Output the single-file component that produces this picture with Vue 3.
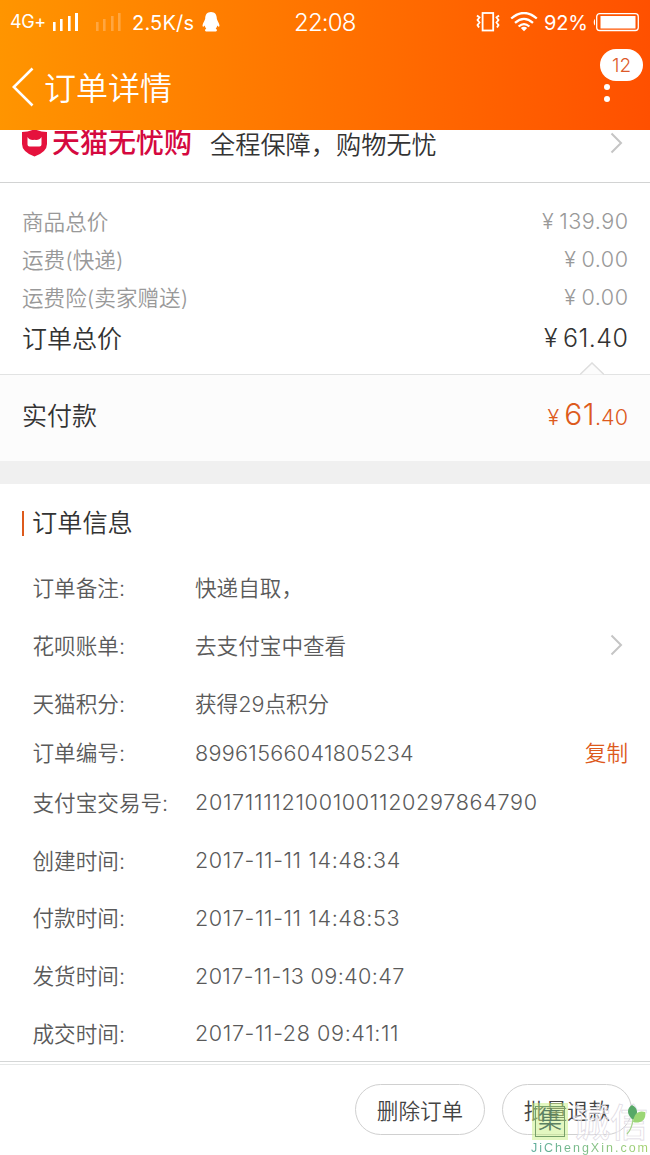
<template>
    <div class="page">
        <header class="header">
            <div class="status-bar">
                <span class="network">4G+</span>
                <svg class="signal" width="26" height="18" viewBox="0 0 26 18" fill="#fff">
                    <rect x="0" y="9" width="2.6" height="9" />
                    <rect x="7" y="6" width="2.6" height="12" />
                    <rect x="15" y="3" width="2.6" height="15" />
                    <rect x="22" y="0" width="3" height="18" />
                </svg>
                <svg class="signal-off" width="26" height="18" viewBox="0 0 26 18" fill="#ffa640">
                    <rect x="0" y="9" width="2.6" height="9" />
                    <rect x="7" y="6" width="2.6" height="12" />
                    <rect x="15" y="3" width="2.6" height="15" />
                    <rect x="22" y="0" width="2.6" height="18" />
                </svg>
                <span class="speed">2.5K/s</span>
                <svg class="penguin" width="18" height="20" viewBox="0 0 18 20" fill="#fff">
                    <path d="M9 0C5 0 3.2 2.8 3.2 6.4C3.2 8 1 10.500 .6 13C.4 14.800 1 15.500 2.700 13.500C3 15 3.500 15.800 4.300 16.500C2.500 17.500 2.500 19.500 5 19.500H13C15.500 19.500 15.500 17.500 13.700 16.500C14.500 15.800 15 15 15.300 13.500C17 15.500 17.600 14.800 17.400 13C17 10.500 14.800 8 14.800 6.400C14.800 2.800 13 0 9 0Z" />
                </svg>
                <span class="clock">22:08</span>
                <svg class="vibrate" width="24" height="20" viewBox="0 0 24 20" fill="none" stroke="#fff" stroke-width="1.8">
                    <rect x="6.600" y="1" width="10.600" height="17.500" />
                    <path d="M1 3.500L3.500 5.500L1.500 8L3.500 10.500L1.500 13L3 15.500M23 3.500L20.500 5.500L22.500 8L20.500 10.500L22.500 13L21 15.500" />
                </svg>
                <svg class="wifi" width="28" height="20" viewBox="0 0 28 20" fill="none" stroke="#fff" stroke-width="2.3">
                    <path d="M1.200 6.500Q14 -4.500 26.800 6.500M5 10.800Q14 3 23 10.800M8.600 14.500Q14 9.800 19.400 14.500" />
                    <path d="M10.800 16Q14 13.500 17.200 16L14 19.300Z" fill="#fff" stroke="none" />
                </svg>
                <span class="percent">92%</span>
                <svg class="battery" width="46" height="20" viewBox="0 0 46 20">
                    <rect x="3.700" y="1.700" width="41.600" height="16.800" rx="3" fill="none" stroke="#fff" stroke-width="1.300" />
                    <rect x="7.500" y="4" width="35" height="12.500" fill="#fff" />
                    <path d="M2 7C.3 7.500 .3 13 2 13.500Z" fill="#fff" />
                </svg>
            </div>
            <div class="title-bar">
                <svg class="back" width="22" height="40" viewBox="0 0 22 40" fill="none" stroke="#fff" stroke-width="2.6">
                    <path d="M20.500 1.500L1.800 20L20.500 38.500" />
                </svg>
                <h1>订单详情</h1>
                <div class="more">
                    <span class="badge">12</span>
                    <i></i>
                    <i></i>
                </div>
            </div>
        </header>

        <div class="guarantee">
            <div class="guarantee-inner">
                <svg width="27" height="28" viewBox="0 0 27 28">
                    <path d="M1 3Q8 3 13.500 0Q19 3 26 3V15Q26 23 13.500 27.500Q1 23 1 15Z" fill="#e5123d" />
                    <path d="M6.500 8Q8.500 11.500 13.500 10.800Q18.500 11.500 20.500 8V15.500Q20.500 17.500 18.500 17.500H8.500Q6.500 17.500 6.500 15.500Z" fill="#fff" />
                </svg>
                <span class="mall">天猫无忧购</span>
                <span class="slogan">全程保障，购物无忧</span>
                <svg class="arrow" width="13" height="22" viewBox="0 0 13 22"><path d="M1.500 1.500L11 11L1.500 20.500" /></svg>
            </div>
        </div>

        <section class="prices">
            <div v-for="p in prices" :key="p.label" class="price" :class="{ total: p.total }">
                <span>{{ p.label }}</span>
                <span class="amount"><em>¥</em>{{ p.amount }}</span>
            </div>
        </section>

        <section class="paid">
            <svg class="notch" width="24" height="13" viewBox="0 0 24 13">
                <path d="M0 12.500L12 1L24 12.500" fill="#fcfcfc" stroke="#dedede" stroke-width="1.500" />
            </svg>
            <span>实付款</span>
            <span class="paid-amount"><em>¥</em><b>61</b>.40</span>
        </section>

        <div class="gap"></div>

        <section class="info">
            <h2>订单信息</h2>
            <div v-for="row in rows" :key="row.label" class="row" :class="{ compact: row.copy }">
                <span class="label">{{ row.label }}:</span>
                <span class="value" :class="row.kind">{{ row.value }}</span>
                <svg v-if="row.link" class="arrow" width="13" height="22" viewBox="0 0 13 22"><path d="M1.500 1.500L11 11L1.500 20.500" /></svg>
                <span v-if="row.copy" class="copy">复制</span>
            </div>
        </section>

        <footer class="footer">
            <button>删除订单</button>
            <button>批量退款</button>
            <div class="watermark">
                <div class="mark-top">
                    <span class="mark-box">集</span>
                    <span class="mark-name">诚信</span>
                    <svg class="leaf" width="20" height="30" viewBox="0 0 20 30">
                        <path d="M7 15C0 9 1 3 6 0C12 3 13 9 7 15Z" fill="#57a867" />
                        <path d="M7 17C8 8 13 5 19 7C21 15 14 19 7 17Z" fill="#9bd675" />
                        <path d="M7 14Q6 24 1 29" fill="none" stroke="#a6d48c" stroke-width="1.300" />
                    </svg>
                </div>
                <div class="mark-url">JiChengXin.com</div>
            </div>
        </footer>
    </div>
</template>

<script setup>
import { ref } from 'vue';

const prices = ref([
    { label: '商品总价', amount: '139.90' },
    { label: '运费(快递)', amount: '0.00' },
    { label: '运费险(卖家赠送)', amount: '0.00' },
    { label: '订单总价', amount: '61.40', total: true }
]);

const rows = ref([
    { label: '订单备注', value: '快递自取，' },
    { label: '花呗账单', value: '去支付宝中查看', link: true },
    { label: '天猫积分', value: '获得29点积分' },
    { label: '订单编号', value: '89961566041805234', copy: true, kind: 'number' },
    { label: '支付宝交易号', value: '2017111121001001120297864790', kind: 'trade' },
    { label: '创建时间', value: '2017-11-11 14:48:34', kind: 'date' },
    { label: '付款时间', value: '2017-11-11 14:48:53', kind: 'date' },
    { label: '发货时间', value: '2017-11-13 09:40:47', kind: 'date tight' },
    { label: '成交时间', value: '2017-11-28 09:41:11', kind: 'date' }
]);
</script>

<style>
body {
    margin: 0;
    background: #fff;
}
</style>

<style scoped>
* {
    box-sizing: border-box;
}

.page {
    width: 650px;
    height: 1155px;
    display: flex;
    flex-direction: column;
    overflow: hidden;
    background: #fff;
    font-family: Inter, "Noto Sans CJK SC", sans-serif;
    font-weight: 350;
    color: #333;
    white-space: nowrap;
}

svg {
    display: block;
    flex: none;
}

em,
b {
    font-style: normal;
    font-weight: inherit;
}

.header {
    flex: none;
    height: 130px;
    background: linear-gradient(92deg, #ff9500, #ff5000);
    color: #fff;
}

.status-bar {
    height: 44px;
    display: flex;
    align-items: center;
    line-height: 44px;
    padding-left: 10px;
    font-weight: 400;
}

.network {
    width: 43px;
    font-size: 18px;
    letter-spacing: -0.4px;
}

.signal-off {
    margin-left: 17px;
}

.speed {
    width: 70px;
    margin-left: 10px;
    padding-top: 1px;
    font-size: 20px;
    letter-spacing: 0.2px;
}

.clock {
    width: 64px;
    margin-left: 74px;
    padding-top: 2px;
    font-size: 24px;
    font-weight: 350;
    letter-spacing: -0.8px;
}

.vibrate {
    margin-left: 118px;
}

.wifi {
    margin-left: 10px;
}

.percent {
    width: 45px;
    margin-left: 6px;
    padding-top: 2px;
    font-size: 20px;
    letter-spacing: -0.2px;
}

.battery {
    margin-left: 4px;
}

.title-bar {
    height: 86px;
    display: flex;
    align-items: center;
    padding: 0 7px 0 12px;
}

h1 {
    margin: 4px 0 0 10px;
    font-size: 32px;
    line-height: 40px;
    font-weight: 350;
}

.more {
    align-self: flex-start;
    margin: 5px 0 0 auto;
    width: 43px;
}

.badge {
    display: block;
    height: 32px;
    margin-bottom: 3px;
    border-radius: 16px;
    background: #fff;
    color: #dd5a2a;
    font-size: 19px;
    line-height: 34px;
    text-align: center;
}

.more i {
    display: block;
    width: 6px;
    height: 6px;
    margin: 0 0 6px 4px;
    border-radius: 50%;
    background: #fff;
}

.guarantee {
    flex: none;
    height: 53px;
    overflow: hidden;
    border-bottom: 1px solid #d2d3d3;
}

.guarantee-inner {
    height: 76px;
    margin-top: -25px;
    display: flex;
    align-items: center;
    padding: 0 27px 0 21px;
}

.mall {
    width: 158px;
    margin-left: 4px;
    font-size: 28px;
    line-height: 36px;
    font-weight: 500;
    color: #d5093f;
}

.slogan {
    font-size: 25.2px;
    line-height: 36px;
    margin-top: 3px;
}

.arrow {
    margin-left: auto;
    fill: none;
    stroke: #c5c5c5;
    stroke-width: 2;
}

.prices {
    flex: none;
    height: 191px;
    padding: 20px 22px 0;
}

.price {
    height: 38px;
    display: flex;
    justify-content: space-between;
    font-size: 21.6px;
    line-height: 38px;
    color: #999;
}

.amount {
    margin-top: -1px;
    letter-spacing: 0.5px;
    margin-right: -0.5px;
}

.amount em {
    margin-right: 5px;
}

.price.total {
    height: 44px;
    font-size: 25px;
    line-height: 44px;
    color: #333;
}

.paid {
    position: relative;
    flex: none;
    height: 87px;
    display: flex;
    justify-content: space-between;
    align-items: center;
    padding: 0 22px 8px;
    border-top: 1px solid #e2e3e3;
    background: #fcfcfc;
    font-size: 25px;
}

.notch {
    position: absolute;
    right: 46px;
    top: -13px;
}

.paid-amount {
    font-size: 21.6px;
    color: #dd5a1c;
}

.paid-amount b {
    font-size: 30px;
    letter-spacing: 0.5px;
}

.paid-amount em {
    margin-right: 5px;
}

.gap {
    flex: none;
    height: 23px;
    background: #f0f0f0;
}

.info {
    flex: 1;
    min-height: 0;
    overflow: hidden;
    padding: 27px 22px 0;
}

h2 {
    margin: 0 0 22px;
    padding-left: 8px;
    border-left: 2.5px solid #dd5a1c;
    font-size: 25.2px;
    line-height: 25px;
    font-weight: inherit;
}

.row {
    height: 57.8px;
    display: flex;
    align-items: center;
    padding-left: 10.5px;
    font-size: 21.6px;
    color: #5a5a5a;
}

.row.compact {
    height: 41px;
}

.row .arrow {
    margin-right: 5px;
}

.label {
    width: 162.5px;
}

.number,
.trade,
.date {
    padding-top: 2px;
}

.number {
    letter-spacing: 0.3px;
}

.trade {
    letter-spacing: 0.67px;
}

.date {
    letter-spacing: 0.6px;
}

.date.tight {
    letter-spacing: 0.38px;
}

.copy {
    margin-left: auto;
    color: #dd5a1c;
}

.footer {
    position: relative;
    flex: none;
    height: 94px;
    display: flex;
    justify-content: flex-end;
    gap: 17px;
    padding: 19px 18px 0 0;
    border-top: 1px solid #d4d6d6;
    box-shadow: inset 0 2px #fff, inset 0 3px #e6e8e8;
}

button {
    width: 130px;
    height: 51px;
    margin-top: 3px;
    padding: 0;
    border: 1px solid #d0d0d0;
    border-radius: 26px;
    background: #fff;
    font: inherit;
    font-size: 21.6px;
    color: #444;
}

.watermark {
    position: absolute;
    left: 531px;
    top: 42px;
}

.mark-top {
    display: flex;
    align-items: center;
    height: 36px;
}

.mark-box {
    width: 30px;
    height: 31px;
    margin: -2px 0 0 4px;
    border: 1.5px solid #77a06a;
    outline: 3px solid rgba(200, 240, 130, 0.5);
    background: rgba(200, 240, 130, 0.5);
    color: #5a8063;
    font-size: 24px;
    line-height: 26px;
    text-align: center;
}

.mark-name {
    margin-left: 7px;
    font-size: 38px;
    line-height: 36px;
    font-weight: 500;
    color: rgba(255, 255, 255, 0.5);
    -webkit-text-stroke: 0.7px #ddd8e2;
}

.leaf {
    margin: -4px 0 0 -22px;
}

.mark-url {
    margin-top: 1px;
    font-family: "Liberation Sans", sans-serif;
    font-size: 12.5px;
    line-height: 14px;
    font-weight: 400;
    letter-spacing: 2px;
    background: linear-gradient(90deg, #5cab9a, #a6d36f);
    background-clip: text;
    color: transparent;
}
</style>
